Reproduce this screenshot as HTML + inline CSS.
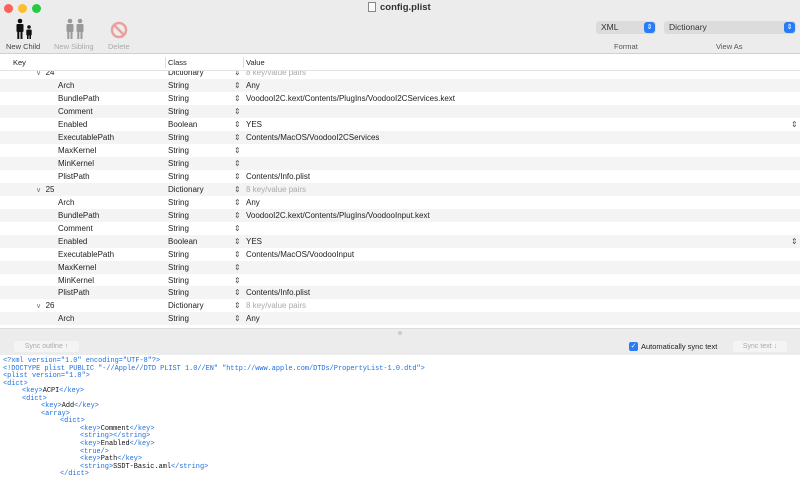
<!DOCTYPE html>
<html><head><meta charset="utf-8"><style>
*{margin:0;padding:0;box-sizing:border-box}
body{width:800px;height:472px;overflow:hidden;background:#fff;font-family:"Liberation Sans",sans-serif;position:relative;color:#222}
.a{position:absolute}
.tb{left:0;top:0;width:800px;height:54px;background:#ececec;border-bottom:1px solid #d0d0d0}
.dot{width:9px;height:9px;border-radius:50%;top:4px}
.lbl{font-size:7.5px;top:42px;color:#444;white-space:nowrap}
.sel{top:21px;height:13px;background:#dcdcdc;border-radius:3px;font-size:8.5px;line-height:13px;padding-left:5px;color:#333}
.sel i{position:absolute;right:1px;top:1px;width:11px;height:11px;background:#2a7cf5;border-radius:3px;color:#fff;font-style:normal;font-size:7px;line-height:11px;text-align:center}
.row{left:0;width:800px;height:13px;font-size:8px;line-height:13px;white-space:nowrap}
.row span{position:absolute}
.g{background:#f4f4f4}
.st{color:#555;font-size:8px}
.hd{left:0;top:54px;width:800px;height:17px;background:#fff;border-bottom:1px solid #e2e2e2;font-size:7.5px;line-height:17px;z-index:2}
.hd span{position:absolute}
.code{left:3px;top:358px;font-family:"Liberation Mono",monospace;font-size:6.9px;line-height:7.55px;color:#1f6fe0}
.code div{height:7.55px;white-space:pre}
.code b{font-weight:normal;color:#111}
</style></head><body>
<div class="a tb"></div>
<div class="a dot" style="left:3.5px;background:#fe5f57"></div>
<div class="a dot" style="left:17.5px;background:#febc2e"></div>
<div class="a dot" style="left:31.5px;background:#28c840"></div>
<div class="a" style="left:368px;top:2px;width:8px;height:10px;border:1px solid #888;background:#fafafa"></div>
<div class="a" style="left:380px;top:2px;font-size:9.5px;font-weight:bold;color:#333">config.plist</div>
<svg class="a" style="left:14px;top:18px" width="20" height="22"><circle cx="6" cy="3" r="2.3" fill="#111"/><rect x="2.5" y="6" width="7" height="8" rx="1" fill="#111"/><rect x="3.3" y="13" width="2" height="8" fill="#111"/><rect x="6.5" y="13" width="2" height="8" fill="#111"/><circle cx="15" cy="9" r="1.8" fill="#111"/><rect x="12.3" y="11.5" width="5.4" height="6" rx="1" fill="#111"/><rect x="13" y="17" width="1.6" height="4" fill="#111"/><rect x="15.4" y="17" width="1.6" height="4" fill="#111"/></svg>
<svg class="a" style="left:65px;top:18px" width="22" height="22"><g fill="#999"><circle cx="5" cy="3" r="2.3"/><rect x="1.5" y="6" width="7" height="8" rx="1"/><rect x="2.3" y="13" width="2" height="8"/><rect x="5.5" y="13" width="2" height="8"/><circle cx="15" cy="3" r="2.3"/><rect x="11.5" y="6" width="7" height="8" rx="1"/><rect x="12.3" y="13" width="2" height="8"/><rect x="15.5" y="13" width="2" height="8"/></g></svg>
<svg class="a" style="left:110px;top:21px" width="18" height="18"><circle cx="9" cy="9" r="7" fill="none" stroke="#e8a0a0" stroke-width="2.5"/><line x1="4" y1="4" x2="14" y2="14" stroke="#e8a0a0" stroke-width="2.5"/></svg>
<div class="a lbl" style="left:6px">New Child</div>
<div class="a lbl" style="left:54px;color:#aaa">New Sibling</div>
<div class="a lbl" style="left:108px;color:#aaa">Delete</div>
<div class="a sel" style="left:596px;width:60px">XML<i>⇕</i></div>
<div class="a sel" style="left:664px;width:132px">Dictionary<i>⇕</i></div>
<div class="a lbl" style="left:614px;color:#555">Format</div>
<div class="a lbl" style="left:716px;color:#555">View As</div>
<div class="a hd"><span style="left:13px">Key</span><span style="left:168px">Class</span><span style="left:246px">Value</span><span style="left:165px;top:3px;width:1px;height:11px;background:#ddd"></span><span style="left:243px;top:3px;width:1px;height:11px;background:#ddd"></span></div>
<div id="rows"></div>
<div class="a" style="left:0;top:328px;width:800px;height:27px;background:#ececec;border-top:1px solid #ddd"></div>
<div class="a" style="left:398px;top:331px;width:4px;height:4px;border-radius:50%;background:#ccc"></div>
<div class="a" style="left:14px;top:341px;width:65px;height:11px;background:#f4f4f4;border-radius:3px;font-size:7px;line-height:11px;color:#aaa;text-align:center">Sync outline ↑</div>
<div class="a" style="left:629px;top:342px;width:9px;height:9px;background:#2a7cf5;border-radius:2px;color:#fff;font-size:7px;line-height:9px;text-align:center">✓</div>
<div class="a" style="left:641px;top:341px;font-size:7.5px;line-height:11px;color:#222">Automatically sync text</div>
<div class="a" style="left:733px;top:341px;width:54px;height:11px;background:#f4f4f4;border-radius:3px;font-size:7px;line-height:11px;color:#aaa;text-align:center">Sync text ↓</div>
<div class="a code"><div>&lt;?xml version="1.0" encoding="UTF-8"?&gt;</div><div>&lt;!DOCTYPE plist PUBLIC "-//Apple//DTD PLIST 1.0//EN" "http://www.apple.com/DTDs/PropertyList-1.0.dtd"&gt;</div><div>&lt;plist version="1.0"&gt;</div><div>&lt;dict&gt;</div><div style="padding-left:19px">&lt;key&gt;<b>ACPI</b>&lt;/key&gt;</div><div style="padding-left:19px">&lt;dict&gt;</div><div style="padding-left:38px">&lt;key&gt;<b>Add</b>&lt;/key&gt;</div><div style="padding-left:38px">&lt;array&gt;</div><div style="padding-left:57px">&lt;dict&gt;</div><div style="padding-left:77px">&lt;key&gt;<b>Comment</b>&lt;/key&gt;</div><div style="padding-left:77px">&lt;string&gt;&lt;/string&gt;</div><div style="padding-left:77px">&lt;key&gt;<b>Enabled</b>&lt;/key&gt;</div><div style="padding-left:77px">&lt;true/&gt;</div><div style="padding-left:77px">&lt;key&gt;<b>Path</b>&lt;/key&gt;</div><div style="padding-left:77px">&lt;string&gt;<b>SSDT-Basic.aml</b>&lt;/string&gt;</div><div style="padding-left:57px">&lt;/dict&gt;</div></div>
<script>
var R=[["v 24","Dictionary","8 key/value pairs",1],["Arch","String","Any"],["BundlePath","String","VoodooI2C.kext/Contents/PlugIns/VoodooI2CServices.kext"],["Comment","String",""],["Enabled","Boolean","YES"],["ExecutablePath","String","Contents/MacOS/VoodooI2CServices"],["MaxKernel","String",""],["MinKernel","String",""],["PlistPath","String","Contents/Info.plist"],["v 25","Dictionary","8 key/value pairs",1],["Arch","String","Any"],["BundlePath","String","VoodooI2C.kext/Contents/PlugIns/VoodooInput.kext"],["Comment","String",""],["Enabled","Boolean","YES"],["ExecutablePath","String","Contents/MacOS/VoodooInput"],["MaxKernel","String",""],["MinKernel","String",""],["PlistPath","String","Contents/Info.plist"],["v 26","Dictionary","8 key/value pairs",1],["Arch","String","Any"],["BundlePath","String","VoodooI2CHID.kext"]];
var h="";R.forEach(function(r,i){var t=66.3+i*12.95;var d=r[3];
h+='<div class="a row'+(i%2?' g':'')+'" style="top:'+t+'px"><span style="left:'+(d?36:58)+'px">'+(d?'<span style="position:static;color:#777;font-size:7px">∨</span>&nbsp; '+r[0].slice(2):r[0])+'</span><span style="left:168px">'+r[1]+'</span><span class="st" style="left:234px">⇕</span><span style="left:246px;'+(d?'color:#aaa':'')+'">'+r[2]+'</span>'+(r[1]=="Boolean"?'<span class="st" style="left:791px">⇕</span>':'')+'</div>';});
document.getElementById("rows").innerHTML=h;
</script>
</body></html>
